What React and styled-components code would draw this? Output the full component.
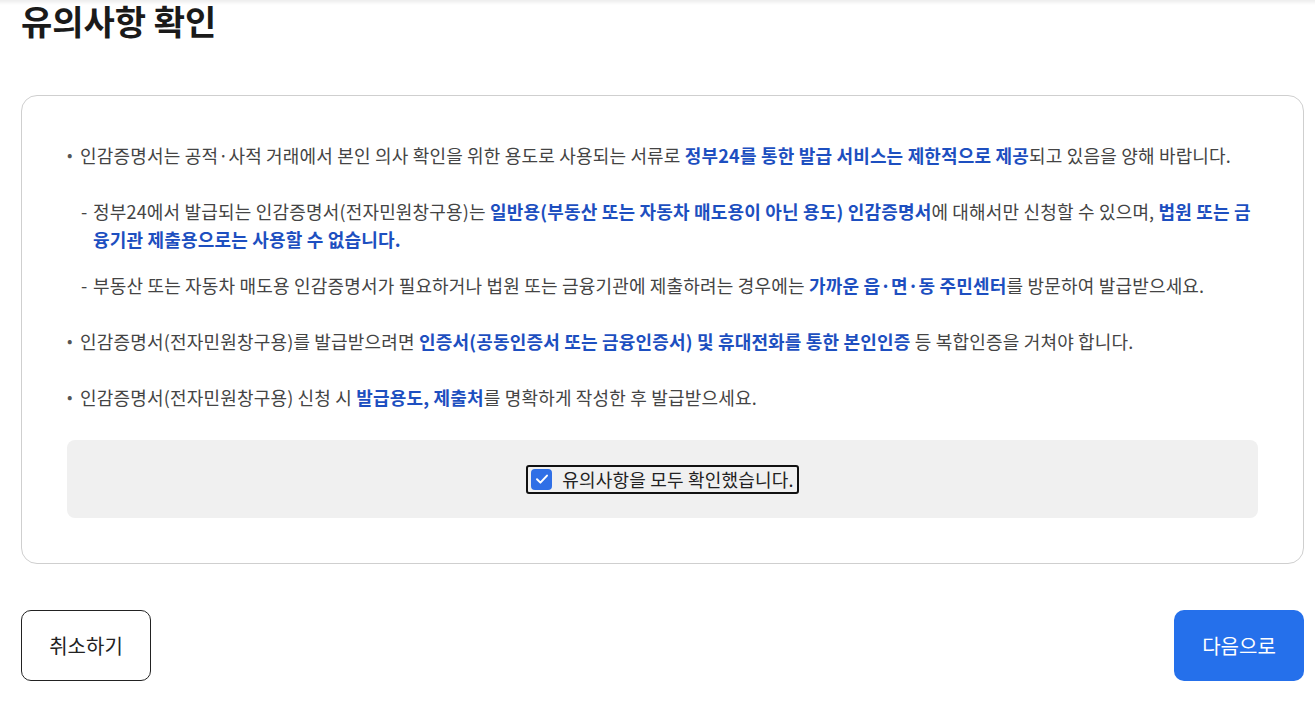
import React, { useState } from "react";
import styled, { createGlobalStyle } from "styled-components";

const Global = createGlobalStyle`
  html, body { margin: 0; padding: 0; background: #fff; }
  body { font-family: "Noto Sans CJK KR", "Noto Sans", sans-serif; color: #222; }
  * { box-sizing: border-box; }
`;

const TopShade = styled.div`
  position: fixed;
  top: 0; left: 0; right: 0;
  height: 5px;
  background: linear-gradient(to bottom, rgba(0,0,0,0.07), rgba(0,0,0,0));
  pointer-events: none;
`;

const Page = styled.div`
  padding: 0 11px 0 21px;
`;

const Title = styled.h1`
  margin: 0;
  font-size: 34px;
  line-height: 42px;
  font-weight: 700;
  color: #1a1a1a;
`;

const Card = styled.section`
  margin-top: 53px;
  border: 1px solid #cfcfcf;
  border-radius: 16px;
  padding: 45px 45px 45px 45px;
`;

const List = styled.ul`
  list-style: none;
  margin: 0;
  padding: 0;
  display: flex;
  flex-direction: column;
  gap: 28px;
`;

const Item = styled.li`
  position: relative;
  padding-left: 13px;
  font-size: 18px;
  line-height: 28px;
  color: #444;
  letter-spacing: 0.18px;
  &::before {
    content: "•";
    position: absolute;
    left: 0;
    top: -1px;
    font-size: 16px;
    color: #555;
  }
`;

const SubList = styled.ul`
  list-style: none;
  margin: 28px 0 0 0;
  padding: 0 0 0 1px;
  display: flex;
  flex-direction: column;
  gap: 18px;
`;

const SubItem = styled.li`
  position: relative;
  padding-left: 12px;
  &::before {
    content: "-";
    position: absolute;
    left: 0;
    top: 0;
  }
`;

const Em = styled.strong`
  font-weight: 700;
  color: #1d4fc0;
`;

const AgreeBox = styled.div`
  margin-top: 29px;
  background: #f0f0f0;
  border-radius: 8px;
  height: 78px;
  display: flex;
  align-items: center;
  justify-content: center;
`;

const AgreeLabel = styled.label`
  display: inline-flex;
  align-items: center;
  gap: 10px;
  height: 29px;
  padding: 0 3px 0 3px;
  border: 2px solid #111;
  border-radius: 3px;
  font-size: 18px;
  color: #222;
  cursor: pointer;
  letter-spacing: 0.2px;
`;

const Box = styled.span`
  width: 21px;
  height: 21px;
  border-radius: 4px;
  background: ${(p) => (p.$on ? "#2f6fe6" : "#fff")};
  border: ${(p) => (p.$on ? "none" : "1px solid #888")};
  display: inline-flex;
  align-items: center;
  justify-content: center;
  flex: none;
`;

const Actions = styled.div`
  margin-top: 46px;
  display: flex;
  justify-content: space-between;
`;

const Button = styled.button`
  width: 130px;
  height: 71px;
  border-radius: 10px;
  font-family: inherit;
  font-size: 20px;
  cursor: pointer;
  border: ${(p) => (p.$primary ? "none" : "1px solid #222")};
  background: ${(p) => (p.$primary ? "#2570eb" : "#fff")};
  color: ${(p) => (p.$primary ? "#fff" : "#222")};
`;

export default function App() {
  const [on, setOn] = useState(true);
  return (
    <>
      <Global />
      <TopShade />
      <Page>
        <Title>유의사항 확인</Title>
        <Card>
          <List>
            <Item>
              인감증명서는 공적·사적 거래에서 본인 의사 확인을 위한 용도로 사용되는 서류로{" "}
              <Em>정부24를 통한 발급 서비스는 제한적으로 제공</Em>되고 있음을 양해 바랍니다.
              <SubList>
                <SubItem>
                  정부24에서 발급되는 인감증명서(전자민원창구용)는{" "}
                  <Em>일반용(부동산 또는 자동차 매도용이 아닌 용도) 인감증명서</Em>에 대해서만 신청할 수 있으며,{" "}
                  <Em>법원 또는 금융기관 제출용으로는 사용할 수 없습니다.</Em>
                </SubItem>
                <SubItem>
                  부동산 또는 자동차 매도용 인감증명서가 필요하거나 법원 또는 금융기관에 제출하려는 경우에는{" "}
                  <Em>가까운 읍·면·동 주민센터</Em>를 방문하여 발급받으세요.
                </SubItem>
              </SubList>
            </Item>
            <Item>
              인감증명서(전자민원창구용)를 발급받으려면{" "}
              <Em>인증서(공동인증서 또는 금융인증서) 및 휴대전화를 통한 본인인증</Em> 등 복합인증을 거쳐야 합니다.
            </Item>
            <Item>
              인감증명서(전자민원창구용) 신청 시 <Em>발급용도, 제출처</Em>를 명확하게 작성한 후 발급받으세요.
            </Item>
          </List>
          <AgreeBox>
            <AgreeLabel onClick={() => setOn(!on)}>
              <Box $on={on}>
                {on && (
                  <svg width="16" height="16" viewBox="0 0 16 16">
                    <path d="M3 8.3 L6.4 11.6 L13 4.6" fill="none" stroke="#fff" strokeWidth="2" strokeLinecap="round" strokeLinejoin="round" />
                  </svg>
                )}
              </Box>
              유의사항을 모두 확인했습니다.
            </AgreeLabel>
          </AgreeBox>
        </Card>
        <Actions>
          <Button>취소하기</Button>
          <Button $primary>다음으로</Button>
        </Actions>
      </Page>
    </>
  );
}
